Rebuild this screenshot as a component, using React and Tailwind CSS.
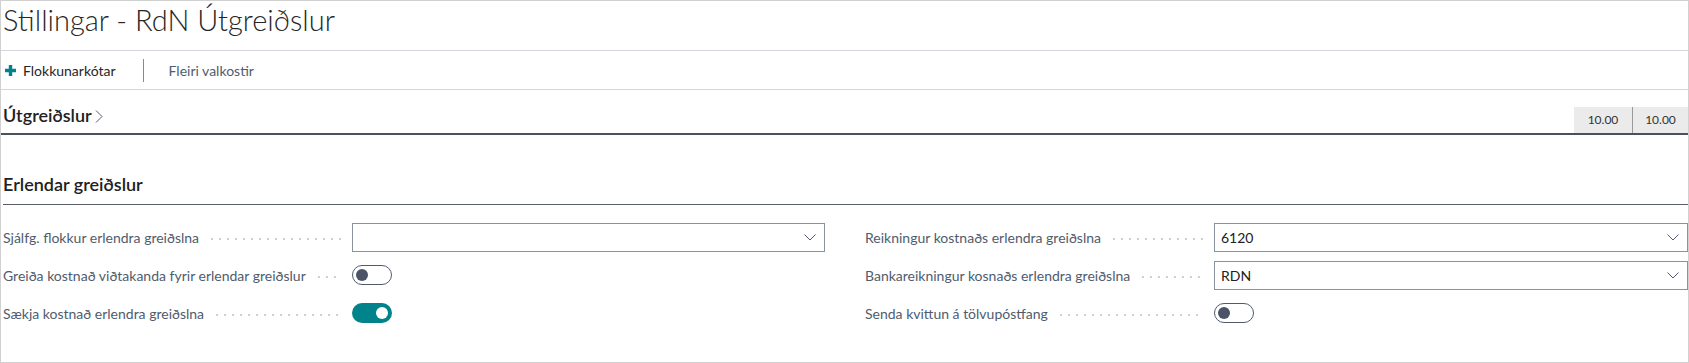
import React from 'react';

const font = { fontFamily: 'Lato, "Open Sans", sans-serif' };

const Chevron = () => (
  <svg width="12" height="7" viewBox="0 0 12 7" fill="none">
    <polyline points="0.5,0.5 6,6 11.5,0.5" stroke="#505c6d" strokeWidth="1" />
  </svg>
);

const Leader = () => (
  <div className="flex-1 h-[2px] mt-[3px] ml-[12px] mr-[11px] bg-[linear-gradient(to_right,#cfcfcf_2px,transparent_2px)] bg-size-[8px_2px] bg-repeat-x" />
);

const Select = ({ value }) => (
  <div className="h-[29px] w-full border border-[#8a929f] bg-white flex items-center justify-between pl-[6px] pr-[8px]">
    <span className="text-[14px] text-[#212121]">{value}</span>
    <Chevron />
  </div>
);

const Toggle = ({ on }) =>
  on ? (
    <div className="w-[40px] h-[20px] rounded-full bg-[#00838a] flex items-center justify-end pr-[4px]">
      <div className="w-[12px] h-[12px] rounded-full bg-white" />
    </div>
  ) : (
    <div className="w-[40px] h-[20px] rounded-full border border-[#505c6d] bg-white flex items-center pl-[3px]">
      <div className="w-[12px] h-[12px] rounded-full bg-[#4b5466]" />
    </div>
  );

const Row = ({ label, children, labelW }) => (
  <div className={`h-[38px] grid items-center ${labelW}`}>
    <div className="flex items-center min-w-0">
      <span className="text-[14px] text-[#505c6d] whitespace-nowrap">{label}</span>
      <Leader />
    </div>
    <div className="flex items-center">{children}</div>
  </div>
);

export default function App() {
  return (
    <div style={font} className="w-[1689px] h-[363px] border border-[#d1d1d1] bg-white flex flex-col overflow-hidden">
      {/* title */}
      <div className="h-[49px] pl-[2px] flex items-start">
        <h1 className="text-[29px] font-light leading-[34px] text-[#262626] mt-[2px]">Stillingar - RdN Útgreiðslur</h1>
      </div>
      <div className="h-px bg-[#d6d6dc]" />

      {/* action bar */}
      <div className="h-[38px] flex items-center pl-[4px]">
        <svg width="11" height="11" viewBox="0 0 11 11">
          <path d="M3.8 0h3.4v3.8H11v3.4H7.2V11H3.8V7.2H0V3.8h3.8z" fill="#00838a" />
        </svg>
        <span className="ml-[7px] text-[14px] text-[#262626]">Flokkunarkótar</span>
        <div className="ml-[27px] w-px h-[23px] bg-[#8a8a8a]" />
        <span className="ml-[25px] text-[14px] text-[#505c6d]">Fleiri valkostir</span>
      </div>
      <div className="h-px bg-[#d6d6dc]" />

      {/* Útgreiðslur header */}
      <div className="h-[43px] flex items-end justify-between pl-[2px]">
        <div className="flex items-center pb-[4px]">
          <span className="text-[18px] font-semibold text-[#212121]">Útgreiðslur</span>
          <svg className="ml-[3px] mt-[2px]" width="8" height="13" viewBox="0 0 8 13" fill="none">
            <polyline points="1,0.5 7,6.5 1,12.5" stroke="#505c6d" strokeWidth="1" />
          </svg>
        </div>
        <div className="flex h-[26px] text-[12px] text-[#333]">
          <div className="w-[58px] bg-[#ebebeb] flex items-center justify-center">10.00</div>
          <div className="w-px bg-[#9a9a9a]" />
          <div className="w-[55px] bg-[#ebebeb] flex items-center justify-center">10.00</div>
        </div>
      </div>
      <div className="h-[2px] bg-[#4a5061]" />

      {/* Erlendar greiðslur */}
      <div className="h-[69px] flex items-end pl-[2px] pb-[6px]">
        <span className="text-[18px] font-semibold text-[#212121]">Erlendar greiðslur</span>
      </div>
      <div className="h-px bg-[#5a5f6b] ml-[2px]" />

      <div className="flex pl-[2px] pt-[13px]">
        <div className="w-[822px] flex flex-col">
          <Row label="Sjálfg. flokkur erlendra greiðslna" labelW="grid-cols-[349px_1fr]">
            <Select value="" />
          </Row>
          <Row label="Greiða kostnað viðtakanda fyrir erlendar greiðslur" labelW="grid-cols-[349px_1fr]">
            <Toggle on={false} />
          </Row>
          <Row label="Sækja kostnað erlendra greiðslna" labelW="grid-cols-[349px_1fr]">
            <Toggle on={true} />
          </Row>
        </div>
        <div className="ml-[40px] flex-1 flex flex-col">
          <Row label="Reikningur kostnaðs erlendra greiðslna" labelW="grid-cols-[349px_1fr]">
            <Select value="6120" />
          </Row>
          <Row label="Bankareikningur kosnaðs erlendra greiðslna" labelW="grid-cols-[349px_1fr]">
            <Select value="RDN" />
          </Row>
          <Row label="Senda kvittun á tölvupóstfang" labelW="grid-cols-[349px_1fr]">
            <Toggle on={false} />
          </Row>
        </div>
      </div>
    </div>
  );
}
